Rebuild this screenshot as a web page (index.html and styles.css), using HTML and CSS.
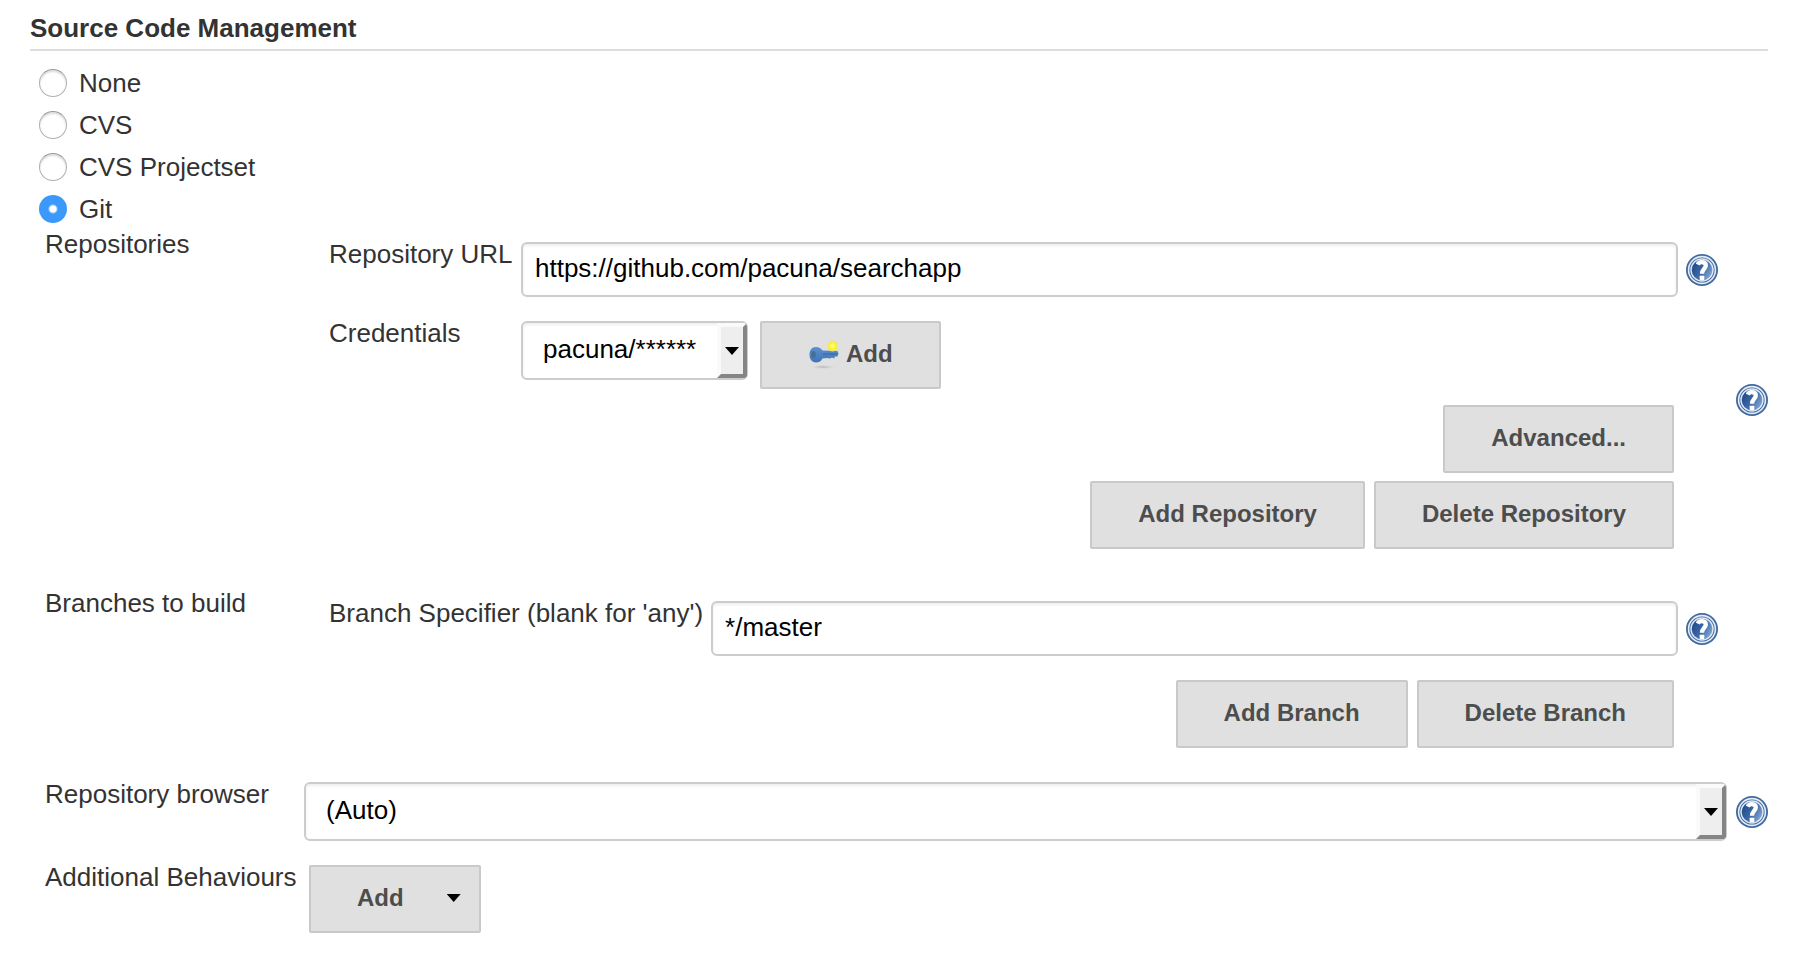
FILE: index.html
```html
<!DOCTYPE html>
<html lang="en">
<head>
<meta charset="utf-8">
<title>Source Code Management</title>
<link rel="stylesheet" href="styles.css">
</head>
<body>
<svg class="sprite" aria-hidden="true">
  <defs>
    <linearGradient id="ball" x1="0" y1="0.2" x2="1" y2="0.8">
      <stop offset="0" stop-color="#1d4585"/>
      <stop offset="0.5" stop-color="#3c68a6"/>
      <stop offset="1" stop-color="#8fb1da"/>
    </linearGradient>
    <symbol id="help-icon" viewBox="0 0 32 32">
      <circle cx="16" cy="16" r="16" fill="#40699f"/>
      <circle cx="16" cy="16" r="13.4" fill="#3f68a2" stroke="#e4ecf6" stroke-width="1.6"/>
      <circle cx="16" cy="16" r="11" fill="url(#ball)" stroke="#dfe8f4" stroke-width="1.4"/>
      <path d="M11.8 10.600C13.200 7.200 20 7.400 19.800 11.600C19.600 14.800 16 15.400 16 19.800" fill="none" stroke="#fff" stroke-width="4.300"/>
      <rect x="13.700" y="21.700" width="4.600" height="4.600" rx="0.600" fill="#fff"/>
    </symbol>
  </defs>
</svg>
<main class="page">
  <form class="scm">
    <h2 class="scm-title">Source Code Management</h2>

    <div class="choices" role="radiogroup" aria-label="Source Code Management">
      <label class="choice"><input class="radio" type="radio" name="scm" value="none">None</label>
      <label class="choice"><input class="radio" type="radio" name="scm" value="cvs">CVS</label>
      <label class="choice"><input class="radio" type="radio" name="scm" value="projectset">CVS Projectset</label>
      <label class="choice"><input class="radio" type="radio" name="scm" value="git" checked>Git</label>
    </div>

    <section class="section section-repos">
      <div class="name">Repositories</div>
      <div class="nested">
        <div class="fields fields-repo">
          <label for="url">Repository URL</label>
          <input class="textbox control" id="url" type="text" value="https://github.com/pacuna/searchapp">
          <a class="help control" href="#url" aria-label="Help for Repository URL"><svg class="help-svg"><use href="#help-icon"/></svg></a>
          <label for="credentials">Credentials</label>
          <div class="credentials control">
            <span class="picker picker-short">
              <select class="select" id="credentials"><option>pacuna/******</option></select>
            </span>
            <button class="button button-key" type="button">
              <svg class="key" viewBox="0 0 32 32" aria-hidden="true">
                <defs>
                  <radialGradient id="glow"><stop offset="0" stop-color="#fffba0"/><stop offset="0.5" stop-color="#fdf23c"/><stop offset="0.8" stop-color="#f2ea4a"/><stop offset="1" stop-color="#e8e480" stop-opacity="0"/></radialGradient>
                  <radialGradient id="shade"><stop offset="0" stop-color="#b2b2b2"/><stop offset="1" stop-color="#e0e0e0" stop-opacity="0"/></radialGradient>
                  <linearGradient id="steel" x1="0" y1="0" x2="0" y2="1"><stop offset="0" stop-color="#5b90cd"/><stop offset="1" stop-color="#4274b4"/></linearGradient>
                </defs>
                <ellipse cx="15" cy="29" rx="14" ry="2.400" fill="url(#shade)"/>
                <path d="M8 9C11 9 13 10.400 14.500 12.500L29.500 13L30.500 15.500L29.500 18.500L27 18.500L26 20.500L24 19.500L22 20.500L19 20L14.500 20.500C13 23.500 10.500 24.500 8 24.500C3.500 24.500 1.500 20.500 1.500 16.500C1.500 12.500 3.500 9 8 9Z" fill="url(#steel)"/>
                <ellipse cx="5.500" cy="16.500" rx="2.200" ry="3.500" fill="#496c94"/>
                <path d="M15 16H29" stroke="#3767a3" stroke-width="1"/>
                <circle cx="24.500" cy="8" r="6" fill="url(#glow)"/>
              </svg>
              Add
            </button>
          </div>
        </div>
        <div class="actions actions-repo">
          <div class="buttons"><button class="button" type="button">Advanced...</button></div>
          <div class="buttons">
            <button class="button" type="button">Add Repository</button>
            <button class="button" type="button">Delete Repository</button>
          </div>
        </div>
      </div>
      <a class="help" href="#repositories" aria-label="Help for Repositories"><svg class="help-svg"><use href="#help-icon"/></svg></a>
    </section>

    <section class="section section-branches">
      <div class="name">Branches to build</div>
      <div class="nested">
        <div class="fields">
          <label for="branch">Branch Specifier (blank for 'any')</label>
          <input class="textbox control" id="branch" type="text" value="*/master">
          <a class="help control" href="#branch" aria-label="Help for Branch Specifier"><svg class="help-svg"><use href="#help-icon"/></svg></a>
        </div>
        <div class="actions actions-branch">
          <div class="buttons">
            <button class="button" type="button">Add Branch</button>
            <button class="button" type="button">Delete Branch</button>
          </div>
        </div>
      </div>
    </section>

    <section class="section section-browser">
      <label class="name" for="browser">Repository browser</label>
      <span class="picker control">
        <select class="select" id="browser"><option>(Auto)</option></select>
      </span>
      <a class="help control" href="#browser" aria-label="Help for Repository browser"><svg class="help-svg"><use href="#help-icon"/></svg></a>
    </section>

    <section class="section">
      <div class="name">Additional Behaviours</div>
      <div class="behaviours control">
        <button class="button button-menu" type="button" aria-haspopup="menu">Add<span class="caret"></span></button>
      </div>
    </section>
  </form>
</main>
</body>
</html>
```

FILE: styles.css
```css
*,
*::before,
*::after {
  box-sizing: border-box;
}

body {
  margin: 0;
  background: #fff;
  color: #333;
  font: 26px/30px "Liberation Sans", Arial, Helvetica, sans-serif;
}

.sprite {
  position: absolute;
  width: 0;
  height: 0;
}

.page {
  padding: 13px 32px 21px 30px;
}

.scm-title {
  margin: 0;
  padding-bottom: 6px;
  border-bottom: 2px solid #ddd;
  font-size: 26px;
  font-weight: bold;
}

/* Provider choice */

.choices {
  display: flex;
  flex-direction: column;
  align-items: flex-start;
  gap: 14px;
  padding: 18px 0 6px 9px;
}

.choice {
  display: flex;
  align-items: center;
  gap: 12px;
  height: 28px;
}

.radio {
  appearance: none;
  width: 28px;
  height: 28px;
  margin: 0;
  border: 1px solid #b0b0b0;
  border-top-color: #999;
  border-radius: 50%;
  background: #fff;
  box-shadow: inset 0 2px 2px #ddd;
}

.radio:checked {
  border: 0;
  background: radial-gradient(circle, #fff 3px, #3b99fc 5px);
  box-shadow: none;
}

/* Settings */

.section {
  display: grid;
  grid-template-columns: 259px 1fr 32px;
  padding-left: 15px;
}

.section > .name {
  white-space: nowrap;
}

.section > .picker {
  margin-right: 9px;
}

.section-repos {
  padding-bottom: 22px;
  margin-bottom: 17px;
}

.section-branches {
  margin-bottom: 31px;
}

.section-browser {
  margin-bottom: 21px;
}

.nested {
  padding: 10px 18px 0 25px;
}

.fields {
  display: grid;
  grid-template-columns: auto 1fr 32px;
  gap: 21px 8px;
}

.fields-repo {
  grid-template-columns: 184px 1fr 32px;
}

.control {
  margin-top: 3px;
}

.textbox,
.select {
  width: 100%;
  border: 2px solid #ccc;
  border-radius: 6px;
  background: #fff;
  box-shadow: inset 0 2px 3px #eee;
  color: #000;
  font: inherit;
}

.textbox {
  height: 55px;
  padding: 9px 12px 12px;
}

.picker {
  position: relative;
  display: block;
}

.picker-short {
  width: 227px;
}

.select {
  appearance: none;
  display: block;
  height: 59px;
  padding: 11px 32px 14px 20px;
}

/* Raised drop-down knob over the right end of a select */
.picker::before {
  content: "";
  position: absolute;
  top: 2px;
  right: 1px;
  bottom: 2px;
  width: 30px;
  border: 4px solid;
  border-color: #fafafa #858585 #858585 #fafafa;
  border-radius: 0 4px 4px 0;
  background: #eee;
  pointer-events: none;
}

.picker::after,
.caret {
  width: 14px;
  height: 8px;
  background: #000;
  clip-path: polygon(0 0, 100% 0, 50% 100%);
}

.picker::after {
  content: "";
  position: absolute;
  top: 26px;
  right: 9px;
  pointer-events: none;
}

.credentials {
  display: flex;
  align-items: flex-start;
  gap: 12px;
}

.button {
  display: inline-flex;
  align-items: center;
  padding: 17px 46px 19px;
  border: 2px solid #c9c9c9;
  border-radius: 2px;
  background: #e0e0e0;
  color: #4d4d4d;
  font: bold 24px/28px "Liberation Sans", Arial, Helvetica, sans-serif;
}

.button-key {
  gap: 6px;
}

.button-menu {
  gap: 43px;
  padding-right: 18px;
}

.key {
  width: 32px;
  height: 32px;
  margin: -2px 0;
}

.actions {
  display: flex;
  flex-direction: column;
  gap: 8px;
  padding-right: 44px;
}

.actions-repo {
  padding-top: 16px;
}

.actions-branch {
  padding-top: 24px;
}

.buttons {
  display: flex;
  justify-content: flex-end;
  gap: 9px;
}

.behaviours {
  margin-left: 5px;
}

.help {
  align-self: center;
  height: 32px;
}

.section-repos > .help {
  margin-top: 22px;
}

.help-svg {
  display: block;
  width: 32px;
  height: 32px;
}
```
